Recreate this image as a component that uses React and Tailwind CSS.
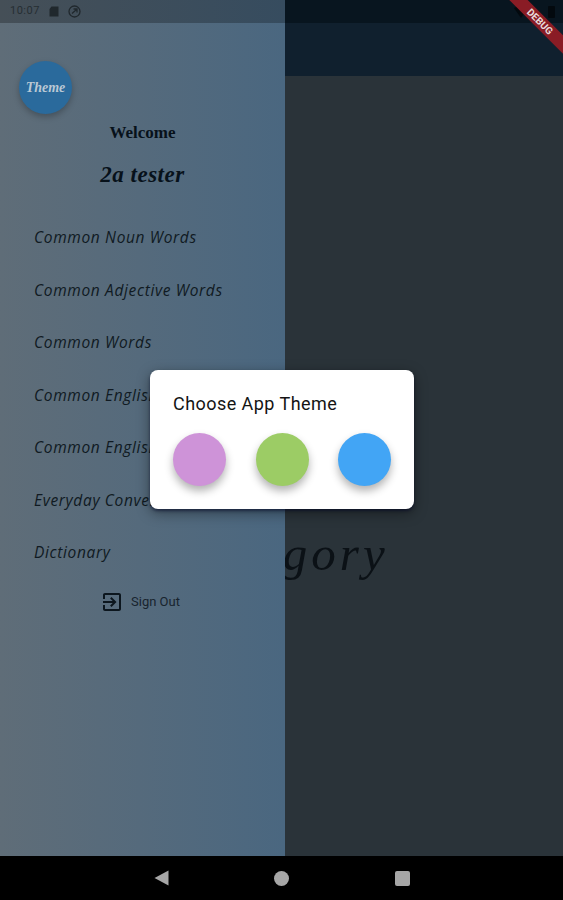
const MENU = [
  'Common Noun Words',
  'Common Adjective Words',
  'Common Words',
  'Common English Phrases',
  'Common English Idioms',
  'Everyday Conversation',
  'Dictionary',
];

const SWATCHES = ['bg-[#ce93d8]', 'bg-[#9ccc65]', 'bg-[#42a5f5]'];

function Drawer() {
  return (
    <div className="absolute left-0 top-0 bottom-[44px] w-[285px] flex flex-col bg-gradient-to-r from-[#5f6d78] to-[#4a6780]">
      <div className="h-[23px] shrink-0 flex items-center gap-[9px] pl-[10px] bg-gradient-to-r from-[#454f57] to-[#364c5f]">
        <span className="text-[11px] text-[#262e33] font-['Roboto',sans-serif] tracking-[0.5px]">10:07</span>
        <svg width="10" height="11" viewBox="0 0 10 11" className="text-[#20282d]">
          <path d="M2.5 0.5H9.5V10.5H0.5V3Z" fill="currentColor" />
        </svg>
        <svg width="13" height="13" viewBox="0 0 13 13" fill="none" stroke="#20282d" strokeWidth="1.3">
          <circle cx="6.5" cy="6.5" r="5.5" />
          <path d="M4 8.5 8.5 4.5M5.5 4H9V7.5" />
        </svg>
      </div>
      <div className="pl-[19px] pt-[38px]">
        <div className="w-[53px] h-[53px] rounded-full bg-[#2a6a9c] shadow-[0_3px_6px_rgba(0,0,0,0.25)] flex items-center justify-center">
          <span className="text-[14px] font-bold italic text-[#b9c8d4] font-['Liberation_Serif',serif]">Theme</span>
        </div>
      </div>
      <div className="flex flex-col items-center text-[#07111a] font-['Liberation_Serif',serif]">
        <span className="text-[17px] font-bold mt-[7px] leading-[24px]">Welcome</span>
        <span className="text-[23px] font-bold italic mt-[15px] leading-[30px] tracking-[0.5px]">2a tester</span>
      </div>
      <div className="flex flex-col gap-[30.5px] pl-[34px] mt-[36px]">
        {MENU.map((item) => (
          <span key={item} className="h-[22px] leading-[22px] whitespace-nowrap text-[15.5px] font-medium italic tracking-[0.65px] text-[#101a22] font-['Open_Sans',sans-serif]">
            {item}
          </span>
        ))}
      </div>
      <div className="flex items-center gap-[7px] pl-[100px] mt-[27px]">
        <svg width="24" height="24" viewBox="0 0 24 24" fill="#0c161e">
          <path d="M10.09 15.59L11.5 17l5-5-5-5-1.41 1.41L12.67 11H3v2h9.67l-2.58 2.59zM19 3H5c-1.11 0-2 .9-2 2v4h2V5h14v14H5v-4H3v4c0 1.1.89 2 2 2h14c1.1 0 2-.9 2-2V5c0-1.1-.9-2-2-2z" />
        </svg>
        <span className="text-[13px] text-[#18242e] font-['Roboto',sans-serif]">Sign Out</span>
      </div>
    </div>
  );
}

export default function App() {
  return (
    <div className="relative w-[563px] h-[900px] overflow-hidden flex flex-col bg-black">
      <div className="flex-1 flex flex-col min-h-0 bg-[#2a3339]">
        <div className="h-[23px] shrink-0 flex items-center justify-end gap-[20px] pr-[8px] bg-[#08151f]">
          <svg width="14" height="12" viewBox="0 0 14 12"><path d="M0 2 7 12 14 2Q7-2 0 2Z" fill="#03090e" /></svg>
          <div className="w-[7px] h-[12px] rounded-[1px] bg-[#03090e]" />
        </div>
        <div className="h-[53px] shrink-0 bg-[#10202e]" />
        <div className="pt-[450px] text-center text-[49px] leading-[56px] italic tracking-[4px] text-[#0b1116] font-['Liberation_Serif',serif]">
          Category
        </div>
      </div>

      <div className="h-[44px] shrink-0 flex items-center justify-center gap-[105.5px] bg-black">
        <svg width="15" height="16" viewBox="0 0 15 16"><path d="M14.5 0.5V15.5L0.5 8Z" fill="#a6a6a6" /></svg>
        <div className="w-[15px] h-[15px] rounded-full bg-[#a6a6a6]" />
        <div className="w-[15px] h-[15px] rounded-[2px] bg-[#a6a6a6]" />
      </div>

      <Drawer />

      {/* debug ribbon */}
      <div className="absolute top-[15px] right-[-32px] w-[110px] h-[13px] rotate-45 bg-[#8a1c25] flex items-center justify-center">
        <span className="text-[10px] leading-none font-bold text-[#e8dcdc] font-['Roboto',sans-serif]">DEBUG</span>
      </div>

      {/* theme dialog */}
      <div className="absolute left-[150px] top-[370px] w-[264px] h-[139px] rounded-[8px] bg-white shadow-[0_2px_3px_rgba(0,5,40,0.5),0_4px_14px_rgba(0,0,0,0.4)] px-[23px] pt-[22px]">
        <div className="text-[18px] leading-[24px] tracking-[0.45px] text-[#141414] font-['Roboto',sans-serif]">Choose App Theme</div>
        <div className="flex justify-between mt-[17px]">
          {SWATCHES.map((c) => (
            <div key={c} className={`w-[53px] h-[53px] rounded-full shadow-[0_5px_9px_rgba(0,0,0,0.3)] ${c}`} />
          ))}
        </div>
      </div>
    </div>
  );
}
